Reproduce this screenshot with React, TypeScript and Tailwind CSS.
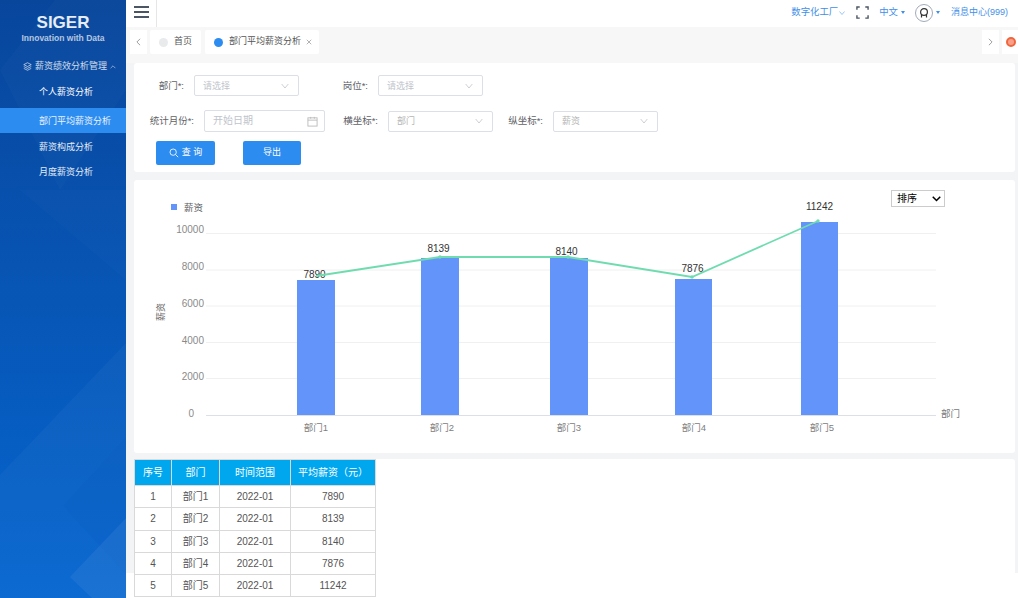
const FONT = "font-['Liberation_Sans','Noto_Sans_CJK_SC',sans-serif]";

function Chevron({ className = "" }: { className?: string }) {
  return (
    <svg viewBox="0 0 12 8" className={className} fill="none" stroke="currentColor" strokeWidth="1">
      <path d="M1 1l5 6 5-6" />
    </svg>
  );
}

function Select({ text, dark }: { text: string; dark?: boolean }) {
  return (
    <div className={`w-[105px] h-[21px] border border-[#dcdfe6] rounded-[2px] flex items-center justify-between pl-[8px] pr-[9px] text-[9px] ${dark ? "text-[#b5b5b5]" : "text-[#c0c4cc]"}`}>
      <span className="pt-[2px]">{text}</span>
      <Chevron className="w-[8px] h-[6px] text-[#b4b8c0]" />
    </div>
  );
}

function Label({ w, text }: { w: string; text: string }) {
  return <div className={`${w} text-right text-[9.5px] text-[#606266] pr-[10px] shrink-0`}>{text}</div>;
}

function MenuItem({ text, active }: { text: string; active?: boolean }) {
  return (
    <div className={`h-[25px] flex items-center pl-[39px] text-[9px] ${active ? "bg-[#2d8cf0] text-white/90 pt-[2px]" : "text-white/90"}`}>{text}</div>
  );
}

function Chart() {
  const grid = [
    [233.5, 233, "10000"],
    [270, 270, "8000"],
    [306, 307, "6000"],
    [342.5, 344, "4000"],
    [378.5, 380, "2000"],
  ] as const;
  const bars = [
    [297, 280, 38, "部门1", "7890", 314.5, 278],
    [421, 258, 38, "部门2", "8139", 438.5, 252],
    [550, 258, 38, "部门3", "8140", 566.5, 255],
    [675, 279, 37, "部门4", "7876", 692.5, 272],
    [801, 222, 37, "部门5", "11242", 819.5, 210],
  ] as const;
  const labels = [316, 442, 569, 694, 822];
  return (
    <svg width="881" height="273" viewBox="134 180 881 273" className="block">
      <rect x="171" y="204" width="6" height="6" fill="#6294f9" />
      <text x="184" y="211" fontSize="9.5" fill="#606266">薪资</text>
      {grid.map(([y, by, t]) => (
        <g key={t}>
          <line x1="206" x2="936" y1={y} y2={y} stroke="#f0f0f0" strokeWidth="1" />
          <text x="204" y={by} textAnchor="end" fontSize="10" fill="#8a8a8a">{t}</text>
        </g>
      ))}
      <text x="194" y="417" textAnchor="end" fontSize="10" fill="#8a8a8a">0</text>
      <line x1="206" x2="936" y1="415.5" y2="415.5" stroke="#dcdfe6" />
      <text x="0" y="0" fontSize="9" fill="#666" textAnchor="middle" transform="translate(164 312) rotate(-90)">薪资</text>
      <text x="941" y="417" fontSize="9.5" fill="#777">部门</text>
      {bars.map(([x, y, w, name, v, lx, ly], i) => (
        <g key={name}>
          <rect x={x} y={y} width={w} height={415 - y} fill="#6294f9" />
          <text x={labels[i]} y="431" textAnchor="middle" fontSize="9.5" fill="#808080">{name}</text>
          <text x={lx} y={ly} textAnchor="middle" fontSize="10" fill="#333">{v}</text>
        </g>
      ))}
      <polyline points="316,276 440,257 568,257 692,277 818,221" fill="none" stroke="#6fdcb0" strokeWidth="1.8" />
      {[[440, 257], [568, 257], [692, 277], [818, 221]].map(([x, y]) => (
        <circle key={x} cx={x} cy={y} r="1.7" fill="#6fdcb0" />
      ))}
    </svg>
  );
}

const rows = [
  ["1", "部门1", "2022-01", "7890"],
  ["2", "部门2", "2022-01", "8139"],
  ["3", "部门3", "2022-01", "8140"],
  ["4", "部门4", "2022-01", "7876"],
  ["5", "部门5", "2022-01", "11242"],
];

export default function App() {
  return (
    <div className={`${FONT} w-[1018px] h-[598px] overflow-hidden flex bg-white`}>
      <aside className="relative w-[126px] h-full shrink-0 overflow-hidden bg-gradient-to-b from-[#08469c] to-[#0566d0]">
        <svg className="absolute inset-0" width="126" height="598" viewBox="0 0 126 598">
          <polygon points="126,343 0,475 0,598 126,598" fill="#ffffff" opacity="0.03" />
          <polygon points="126,437 63,506 126,575" fill="#003090" opacity="0.04" />
          <polygon points="126,518 70,577 92,598 126,598" fill="#ffffff" opacity="0.06" />
          <polygon points="20,190 126,190 126,280" fill="#ffffff" opacity="0.015" />
          <polygon points="0,70 55,0 126,0 126,90 60,190" fill="#ffffff" opacity="0.02" />
        </svg>
        <div className="relative">
          <div className="pt-[14px] text-center text-white/90">
            <div className="text-[17px] leading-[18px] font-bold">SIGER</div>
            <div className="text-[8.5px] leading-[13px] font-bold text-white/70">Innovation with Data</div>
          </div>
          <div className="mt-[9px] h-[25px] flex items-center pl-[23px] text-[9px] text-white/80">
            <svg viewBox="0 0 12 12" className="w-[9px] h-[9px] mr-[3px]" fill="none" stroke="currentColor" strokeWidth="1">
              <path d="M6 1l5 2.5-5 2.5-5-2.5zM1 6l5 2.5L11 6M1 8.5L6 11l5-2.5" />
            </svg>
            <span>薪资绩效分析管理</span>
            <svg viewBox="0 0 10 6" className="w-[6px] h-[4px] ml-[3px]" fill="none" stroke="currentColor"><path d="M1 5l4-4 4 4" /></svg>
          </div>
          <div className="mt-[1px] h-[25px] flex items-center pl-[39px] text-[9px] text-white">个人薪资分析</div>
          <div className="h-[3px]" />
          <MenuItem text="部门平均薪资分析" active />
          <div className="h-[2px]" />
          <MenuItem text="薪资构成分析" />
          <MenuItem text="月度薪资分析" />
        </div>
      </aside>
      <main className="flex-1 min-w-0 flex flex-col bg-white">
        <header className="h-[27px] bg-white flex items-center shrink-0">
          <div className="w-[31px] h-full border-r border-[#e6e6e6] flex flex-col gap-[3px] items-center pb-[3px] justify-center">
            <div className="w-[15px] h-[2px] bg-[#4b5563]" />
            <div className="w-[15px] h-[2px] bg-[#4b5563]" />
            <div className="w-[15px] h-[2px] bg-[#4b5563]" />
          </div>
          <div className="flex-1" />
          <div className="flex items-center text-[9.4px] text-[#3f8fe8] pr-[10px] pb-[2px]">
            <span>数字化工厂</span>
            <Chevron className="w-[6px] h-[4px] ml-[1px] text-[#3f8fe8]" />
            <svg viewBox="0 0 14 14" className="w-[13px] h-[13px] ml-[11px] text-[#4b5563]" fill="none" stroke="currentColor" strokeWidth="1.5">
              <path d="M1 4V1h3M10 1h3v3M13 10v3h-3M4 13H1v-3" />
            </svg>
            <span className="ml-[10px]">中文</span>
            <span className="ml-[3px] border-x-[2.5px] border-x-transparent border-t-[3px] border-t-[#3f8fe8]" />
            <svg viewBox="0 0 18 18" className="w-[18px] h-[18px] ml-[10px]" fill="none" stroke="#8a94a6" strokeWidth="0.8">
              <circle cx="9" cy="9" r="8.5" />
              <circle cx="9" cy="8" r="3.4" stroke="#333" strokeWidth="1.2" />
              <path d="M6.500 11v2.500M11.500 11v2.500" stroke="#333" strokeWidth="1.2" />
            </svg>
            <span className="ml-[3px] border-x-[2.5px] border-x-transparent border-t-[3px] border-t-[#3f8fe8]" />
            <span className="ml-[11px] text-[9px]">消息中心(999)</span>
          </div>
        </header>
        <div className="h-[36px] bg-[#f7f7f7] shrink-0 flex items-start pt-[3px] pl-[4px] text-[9px] text-[#555]">
          <div className="w-[17px] h-[24px] bg-white flex items-center justify-center">
            <svg viewBox="0 0 6 10" className="w-[5px] h-[8px] text-[#888]" fill="none" stroke="currentColor"><path d="M5 1L1 5l4 4" /></svg>
          </div>
          <div className="ml-[3px] w-[51px] h-[24px] bg-white rounded-[2px] flex items-center pl-[9px]">
            <span className="w-[9px] h-[9px] rounded-full bg-[#e8eaec] mr-[6px]" />首页
          </div>
          <div className="ml-[4px] w-[114px] h-[24px] bg-white rounded-[2px] flex items-center pl-[9px]">
            <span className="w-[9px] h-[9px] rounded-full bg-[#2d8cf0] mr-[6px]" />部门平均薪资分析
            <svg viewBox="0 0 8 8" className="ml-[5px] w-[6px] h-[6px] text-[#999]" fill="none" stroke="currentColor"><path d="M1 1l6 6M7 1L1 7" /></svg>
          </div>
          <div className="flex-1" />
          <div className="w-[17px] h-[24px] bg-white flex items-center justify-center">
            <svg viewBox="0 0 6 10" className="w-[5px] h-[8px] text-[#888]" fill="none" stroke="currentColor"><path d="M1 1l4 4-4 4" /></svg>
          </div>
          <div className="ml-[3px] w-[16px] h-[24px] bg-white flex items-center pl-[4px]">
            <span className="w-[10px] h-[10px] rounded-full border-[2px] border-[#f0653c] bg-[#f9a08a]" />
          </div>
        </div>
        <div className="flex-1 pl-[8px] pr-[3px] min-h-0 bg-[linear-gradient(#f3f4f6_510px,#ffffff_510px)]">
          <section className="h-[109px] bg-white rounded-[3px] relative">
            <div className="pt-[12px] flex items-center">
              <Label w="w-[60px] pt-[2px]" text="部门*:" />
              <Select text="请选择" />
              <Label w="w-[79px] pt-[2px]" text="岗位*:" />
              <Select text="请选择" />
            </div>
            <div className="mt-[14px] flex items-center">
              <Label w="w-[70px]" text="统计月份*:" />
              <div className="w-[121px] h-[22px] border border-[#dcdfe6] rounded-[2px] flex items-center justify-between pl-[8px] pr-[6px] text-[10px] text-[#c0c4cc]">
                <span className="pb-[2px]">开始日期</span>
                <svg viewBox="0 0 12 12" className="w-[11px] h-[11px] text-[#bbb]" fill="none" stroke="currentColor"><rect x="1" y="2" width="10" height="9" /><path d="M1 4.500h10M4 1v2M8 1v2" /></svg>
              </div>
              <Label w="w-[63px]" text="横坐标*:" />
              <Select text="部门" dark />
              <Label w="w-[60px]" text="纵坐标*:" />
              <Select text="薪资" dark />
            </div>
            <div className="mt-[9px] flex items-center text-white text-[9px]">
              <div className="ml-[22px] w-[59px] h-[24px] bg-[#2d8cf0] rounded-[2px] flex items-center justify-center gap-[3px]">
                <svg viewBox="0 0 12 12" className="w-[10px] h-[10px]" fill="none" stroke="currentColor"><circle cx="5" cy="5" r="3.800" /><path d="M8 8l3 3" /></svg>
                <span>查 询</span>
              </div>
              <div className="ml-[28px] w-[58px] h-[24px] bg-[#2d8cf0] rounded-[2px] flex items-center justify-center">导出</div>
            </div>
          </section>
          <section className="relative mt-[8px] h-[273px] bg-white rounded-[3px]">
            <Chart />
            <div className="absolute left-[757px] top-[10px] w-[54px] h-[17px] border border-[#ccc] flex items-center justify-between pl-[5px] pr-[3px] text-[10px] text-black bg-white">
              <span>排序</span>
              <svg viewBox="0 0 12 8" className="w-[9px] h-[6px]" fill="none" stroke="currentColor" strokeWidth="2"><path d="M1 1l5 5 5-5" /></svg>
            </div>
          </section>
          <section className="mt-[6px] bg-white rounded-t-[3px] h-[200px]">
            <table className="border-collapse text-[10px] text-[#555] text-center table-fixed w-[241px]">
              <colgroup>
                <col className="w-[37px]" />
                <col className="w-[48px]" />
                <col className="w-[71px]" />
                <col className="w-[85px]" />
              </colgroup>
              <thead>
                <tr className="h-[26px] bg-[#00a7ef] text-white">
                  {["序号", "部门", "时间范围", "平均薪资（元）"].map((h) => (
                    <th key={h} className="border border-[#d9d9d9] font-normal">{h}</th>
                  ))}
                </tr>
              </thead>
              <tbody>
                {rows.map((r) => (
                  <tr key={r[0]} className="h-[22.3px]">
                    {r.map((c, i) => (
                      <td key={i} className="border border-[#d9d9d9]">{c}</td>
                    ))}
                  </tr>
                ))}
              </tbody>
            </table>
          </section>
        </div>
      </main>
    </div>
  );
}
